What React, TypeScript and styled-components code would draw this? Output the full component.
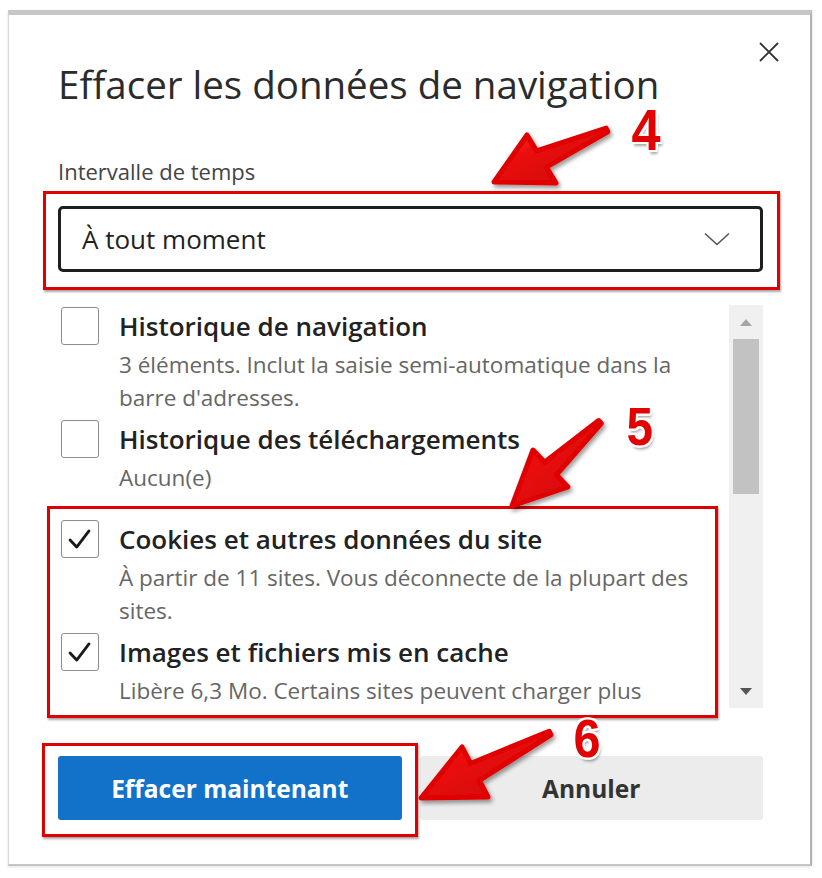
import styled, { createGlobalStyle } from 'styled-components';

const GlobalStyle = createGlobalStyle`
  html, body {
    margin: 0;
    padding: 0;
    background: #ffffff;
  }
  body {
    font-family: "Open Sans", "Noto Sans", sans-serif;
    color: #222;
  }
`;

const Page = styled.div`
  position: relative;
  box-sizing: border-box;
  width: 822px;
  height: 878px;
  padding: 10px 10px 0 8px;
  overflow: hidden;
`;

const Dialog = styled.section`
  box-sizing: border-box;
  width: 804px;
  height: 856px;
  display: flex;
  flex-direction: column;
  padding: 0 47px 0 49px;
  background: #fff;
  border: 1px solid #d8d8d8;
  border-top: 5px solid #c6c6c6;
  border-right: 2px solid #b2b2b2;
  border-bottom: 2px solid #c4c4c4;
  box-shadow: 0 1px 3px rgba(0, 0, 0, 0.12);
`;

const Header = styled.header`
  display: flex;
  align-items: flex-start;
  padding-top: 46px;
`;

const Title = styled.h1`
  flex: 1;
  margin: 0;
  font-size: 38.5px;
  line-height: 46px;
  font-weight: 400;
  color: #2b2b2b;
  white-space: nowrap;
`;

const CloseButton = styled.button`
  flex: none;
  width: 26px;
  height: 26px;
  margin: -22px -19px 0 0;
  padding: 0;
  border: none;
  background: none;
  display: flex;
  align-items: center;
  justify-content: center;
  color: #333;
`;

const Label = styled.div`
  margin-top: 52px;
  font-size: 22px;
  line-height: 24px;
  color: #444;
`;

const Select = styled.div`
  box-sizing: border-box;
  margin-top: 23px;
  height: 66px;
  display: flex;
  align-items: center;
  justify-content: space-between;
  padding: 0 30px 0 21px;
  border: 3px solid #1e1e1e;
  border-radius: 5px;
  font-size: 26px;
  color: #222;
`;

const List = styled.div`
  margin-top: 33px;
  height: 403px;
  display: flex;
  gap: 10px;
`;

const Items = styled.div`
  flex: 1;
  overflow: hidden;
  display: flex;
  flex-direction: column;
  gap: 6px;
  padding: 2px 0 0 3px;
`;

const Item = styled.div<{ $spaced?: boolean }>`
  display: flex;
  gap: 20px;
  margin-top: ${p => (p.$spaced ? '20px' : '0')};
`;

const Box = styled.div`
  box-sizing: border-box;
  flex: none;
  width: 38px;
  height: 38px;
  border: 1.5px solid #8c8c8c;
  border-radius: 3px;
  display: flex;
  align-items: center;
  justify-content: center;
  background: #fff;
`;

const ItemText = styled.div`
  display: flex;
  flex-direction: column;
  gap: 3px;
`;

const ItemTitle = styled.div`
  font-size: 26px;
  line-height: 38px;
  font-weight: 600;
  color: #222;
  white-space: nowrap;
`;

const ItemDesc = styled.div`
  font-size: 22.5px;
  line-height: 33px;
  color: #666;
  white-space: nowrap;
`;

const Scrollbar = styled.div`
  flex: none;
  width: 34px;
  display: flex;
  flex-direction: column;
  align-items: center;
  background: #f0f0f0;
`;

const ScrollArrow = styled.div<{ $down?: boolean }>`
  height: 34px;
  display: flex;
  align-items: center;
  justify-content: center;
  color: ${p => (p.$down ? '#555' : '#a6a6a6')};
`;

const Thumb = styled.div`
  width: 26px;
  height: 155px;
  background: #c2c2c2;
`;

const Footer = styled.footer`
  margin-top: 48px;
  display: grid;
  grid-template-columns: 1fr 1fr;
  gap: 18px;
`;

const Button = styled.button<{ $primary?: boolean }>`
  height: 64px;
  border: none;
  border-radius: 3px;
  font-family: inherit;
  font-size: 24.5px;
  font-weight: 700;
  background: ${p => (p.$primary ? '#1272c9' : '#ececec')};
  color: ${p => (p.$primary ? '#fff' : '#333')};
`;

/* annotation layer (red frames, arrows, step numbers) drawn over the dialog */
const Overlay = styled.div`
  position: absolute;
  inset: 0;
  pointer-events: none;
`;

const Frame = styled.div<{ $x: number; $y: number; $w: number; $h: number }>`
  position: absolute;
  left: ${p => p.$x}px;
  top: ${p => p.$y}px;
  width: ${p => p.$w}px;
  height: ${p => p.$h}px;
  box-sizing: border-box;
  border: 3px solid #e10000;
  box-shadow: 1px 2px 2px rgba(0, 0, 0, 0.35);
`;

const Step = styled.div<{ $x: number; $y: number; $size: number }>`
  position: absolute;
  left: ${p => p.$x}px;
  top: ${p => p.$y}px;
  font-family: "Liberation Sans", Arial, sans-serif;
  font-weight: 700;
  font-size: ${p => p.$size}px;
  line-height: ${p => Math.round(p.$size * 0.76)}px;
  color: #e30000;
  transform: scaleX(0.9);
  text-shadow:
    2px 0 0 #fff, -2px 0 0 #fff, 0 2px 0 #fff, 0 -2px 0 #fff,
    2px 2px 0 #fff, -2px 2px 0 #fff, 2px -2px 0 #fff, -2px -2px 0 #fff,
    2px 4px 3px rgba(0, 0, 0, 0.35);
`;

const ArrowLayer = styled.svg`
  position: absolute;
  inset: 0;
`;

type P = [number, number];

const lerp = (a: P, b: P, t: number): P => [a[0] + (b[0] - a[0]) * t, a[1] + (b[1] - a[1]) * t];

function arrowPoints(tail: P, upper: P, tip: P, lower: P) {
  const mid = lerp(upper, lower, 0.5);
  const n1 = lerp(mid, upper, 0.34);
  const n2 = lerp(mid, lower, 0.34);
  const dx = tail[0] - mid[0];
  const dy = tail[1] - mid[1];
  const len = Math.hypot(dx, dy);
  const nx = (-dy / len) * 2;
  const ny = (dx / len) * 2;
  const t1: P = [tail[0] + nx, tail[1] + ny];
  const t2: P = [tail[0] - nx, tail[1] - ny];
  return [tip, upper, n1, t2, t1, n2, lower].map(p => p.join(',')).join(' ');
}

const arrows = [
  arrowPoints([607, 130], [527, 135], [494, 182], [556, 183]),
  arrowPoints([600, 422], [533, 450], [512, 506], [568, 487]),
  arrowPoints([550, 733], [462, 747], [421, 798], [488, 797]),
];

function Check() {
  return (
    <svg width="38" height="38" viewBox="0 0 38 38">
      <polyline points="8.5,20 15.5,27.5 28.5,10.5" fill="none" stroke="#1a1a1a" strokeWidth="3" strokeLinecap="round" strokeLinejoin="round" />
    </svg>
  );
}

const entries = [
  {
    title: 'Historique de navigation',
    desc: ["3 éléments. Inclut la saisie semi-automatique dans la", "barre d'adresses."],
    checked: false,
  },
  {
    title: 'Historique des téléchargements',
    desc: ['Aucun(e)'],
    checked: false,
  },
  {
    title: 'Cookies et autres données du site',
    desc: ['À partir de 11 sites. Vous déconnecte de la plupart des', 'sites.'],
    checked: true,
    spaced: true,
  },
  {
    title: 'Images et fichiers mis en cache',
    desc: ['Libère 6,3 Mo. Certains sites peuvent charger plus'],
    checked: true,
  },
];

export default function App() {
  return (
    <Page>
      <GlobalStyle />
      <Dialog>
        <Header>
          <Title>Effacer les données de navigation</Title>
          <CloseButton aria-label="Fermer">
            <svg width="22" height="22" viewBox="0 0 22 22">
              <path d="M2 2 L20 20 M20 2 L2 20" stroke="#333" strokeWidth="1.8" fill="none" />
            </svg>
          </CloseButton>
        </Header>

        <Label>Intervalle de temps</Label>
        <Select>
          <span>À tout moment</span>
          <svg width="26" height="14" viewBox="0 0 26 14">
            <polyline points="1,1.5 13,12.5 25,1.5" fill="none" stroke="#555" strokeWidth="1.6" />
          </svg>
        </Select>

        <List>
          <Items>
            {entries.map(e => (
              <Item key={e.title} $spaced={e.spaced}>
                <Box>{e.checked && <Check />}</Box>
                <ItemText>
                  <ItemTitle>{e.title}</ItemTitle>
                  <ItemDesc>
                    {e.desc.map(line => (
                      <div key={line}>{line}</div>
                    ))}
                  </ItemDesc>
                </ItemText>
              </Item>
            ))}
          </Items>
          <Scrollbar>
            <ScrollArrow>
              <svg width="12" height="7" viewBox="0 0 12 7">
                <polygon points="0,7 6,0 12,7" fill="currentColor" />
              </svg>
            </ScrollArrow>
            <Thumb />
            <div style={{ flex: 1 }} />
            <ScrollArrow $down>
              <svg width="12" height="7" viewBox="0 0 12 7">
                <polygon points="0,0 12,0 6,7" fill="currentColor" />
              </svg>
            </ScrollArrow>
          </Scrollbar>
        </List>

        <Footer>
          <Button $primary>Effacer maintenant</Button>
          <Button>Annuler</Button>
        </Footer>
      </Dialog>

      <Overlay>
        <Frame $x={43} $y={191} $w={737} $h={99} />
        <Frame $x={47} $y={506} $w={671} $h={212} />
        <Frame $x={42} $y={743} $w={376} $h={94} />
        <ArrowLayer width="822" height="878" viewBox="0 0 822 878">
          <defs>
            <linearGradient id="arrowFill" x1="0" y1="0" x2="1" y2="1">
              <stop offset="0" stopColor="#ff1a1a" />
              <stop offset="1" stopColor="#c80000" />
            </linearGradient>
            <filter id="arrowShadow" x="-20%" y="-20%" width="140%" height="140%">
              <feDropShadow dx="2" dy="3" stdDeviation="2" floodColor="#000" floodOpacity="0.4" />
            </filter>
          </defs>
          {arrows.map(pts => (
            <polygon
              key={pts}
              points={pts}
              fill="url(#arrowFill)"
              stroke="#e00000"
              strokeWidth="5"
              strokeLinejoin="round"
              filter="url(#arrowShadow)"
            />
          ))}
        </ArrowLayer>
        <Step $x={630} $y={108} $size={58}>4</Step>
        <Step $x={625} $y={407} $size={53}>5</Step>
        <Step $x={572} $y={718} $size={54}>6</Step>
      </Overlay>
    </Page>
  );
}
